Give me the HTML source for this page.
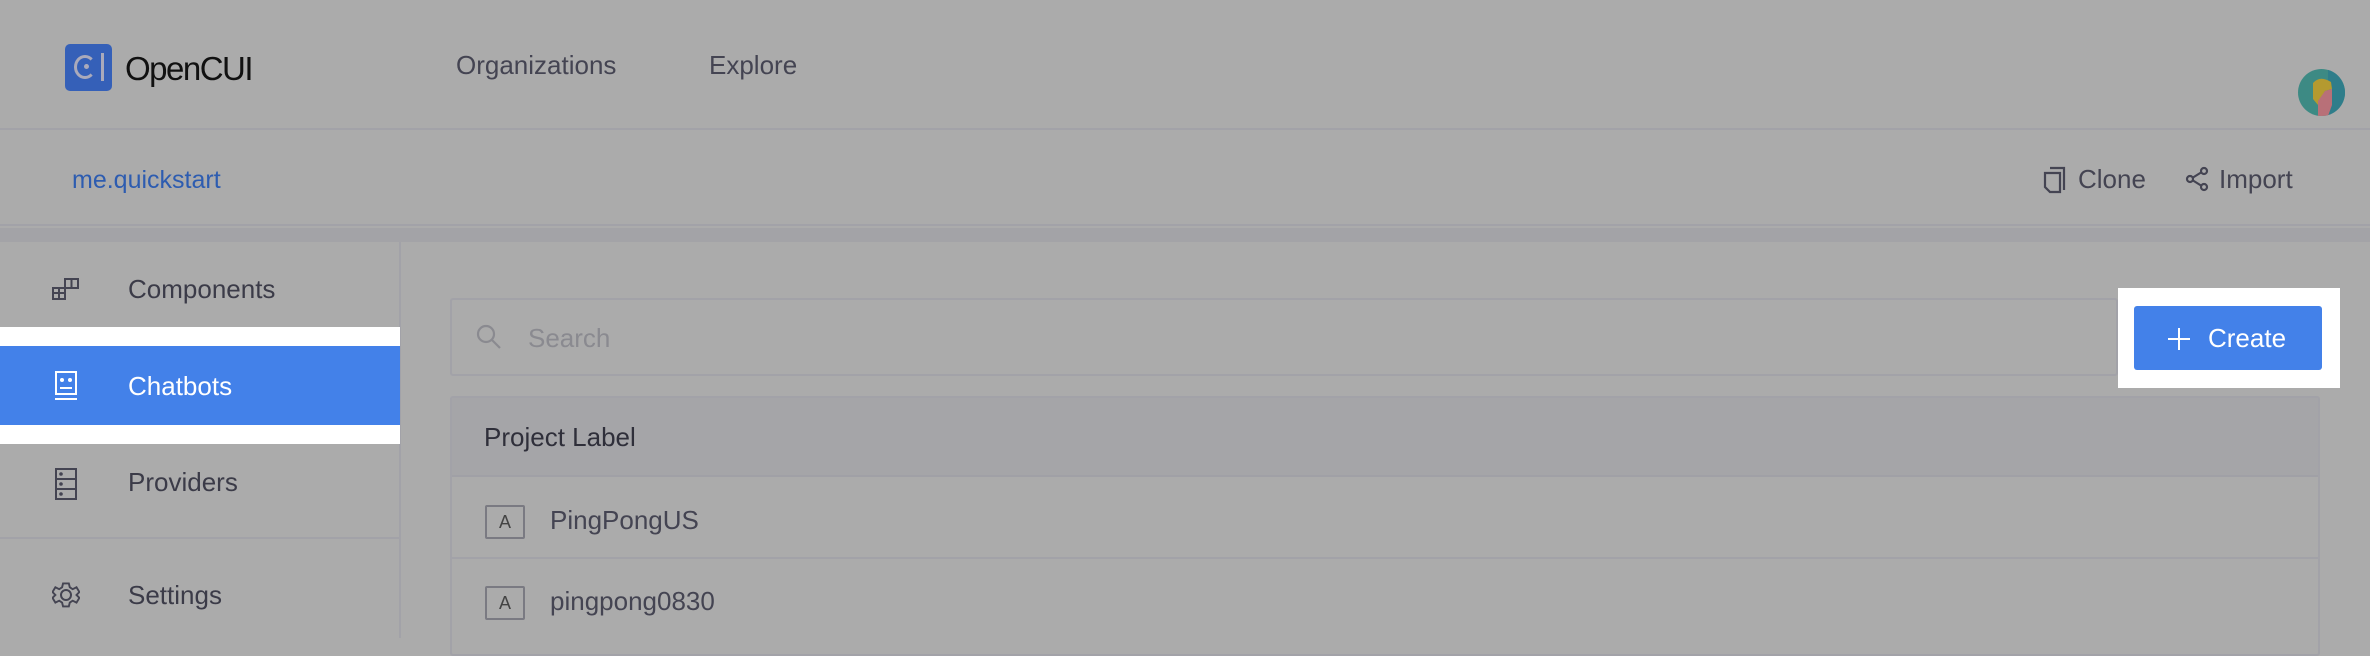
<!DOCTYPE html>
<html><head><meta charset="utf-8"><style>
*{margin:0;padding:0;box-sizing:border-box}
body{width:2370px;height:638px;overflow:hidden;background:#ababab;font-family:"Liberation Sans",sans-serif;color:#3b3b48;position:relative}
.a{position:absolute}
.t{font-size:26px;line-height:1}
</style></head><body>
<!-- header -->
<div class="a" style="left:0;top:0;width:2370px;height:130px;border-bottom:2px solid #a2a2a8"></div>
<div class="a" style="left:65px;top:44px;width:47px;height:47px;background:#3560b8;border-radius:5px"></div>
<div class="a" style="left:74px;top:55px;width:22px;height:24px;border:3px solid #aab;border-right-color:transparent;border-radius:50%"></div>
<div class="a" style="left:84px;top:64px;width:5px;height:5px;background:#aab;border-radius:50%"></div>
<div class="a" style="left:101px;top:53px;width:3px;height:28px;background:#aab"></div>
<div class="a" style="left:125px;top:50px;font-size:33px;color:#111;letter-spacing:-1.5px">OpenCUI</div>
<div class="a t" style="left:456px;top:52px;color:#444452">Organizations</div>
<div class="a t" style="left:709px;top:52px;color:#444452">Explore</div>
<svg class="a" style="left:2298px;top:69px" width="47" height="47" viewBox="0 0 47 47"><defs><clipPath id="c"><circle cx="23.5" cy="23.5" r="23.5"/></clipPath></defs><g clip-path="url(#c)"><rect width="47" height="47" fill="#3d8a84"/><rect x="30" width="17" height="47" fill="#2f7d8a"/><path d="M15 14 Q22 6 33 13 L34 20 L27 22 L20 36 L15 30 Z" fill="#b49a30"/><path d="M20 47 L20 32 L27 22 L34 20 L34 36 L30 47 Z" fill="#b87078"/></g></svg>
<!-- subheader -->
<div class="a" style="left:0;top:132px;width:2370px;height:94px;border-bottom:2px solid #a2a2a8"></div>
<div class="a" style="left:72px;top:166px;font-size:25px;color:#2d5cb0">me.quickstart</div>
<svg class="a" style="left:2043px;top:166px" width="24" height="28" viewBox="0 0 24 28" fill="none" stroke="#444452" stroke-width="2.2"><path d="M7 2H21V24"/><path d="M2 7H17V26H7L2 21Z"/></svg>
<div class="a t" style="left:2078px;top:166px;color:#444452">Clone</div>
<svg class="a" style="left:2185px;top:166px" width="24" height="26" viewBox="0 0 24 26" fill="none" stroke="#444452" stroke-width="2.2"><circle cx="19" cy="5" r="3"/><circle cx="5" cy="13" r="3"/><circle cx="19" cy="21" r="3"/><path d="M8 11.5L16 6.5M8 14.5L16 19.5"/></svg>
<div class="a t" style="left:2219px;top:166px;color:#444452">Import</div>
<div class="a" style="left:0;top:228px;width:2370px;height:14px;background:#a3a3a7"></div>
<!-- sidebar -->
<div class="a" style="left:399px;top:242px;width:2px;height:396px;background:#a2a2a8"></div>
<svg class="a" style="left:52px;top:278px" width="28" height="22" viewBox="0 0 28 22" fill="none" stroke="#444452" stroke-width="2"><path d="M1 10H13V21H1ZM7 10V21M1 15H13M13 1H26V10H13ZM19.5 1V10"/></svg>
<div class="a t" style="left:128px;top:276px">Components</div>
<div class="a" style="left:0;top:327px;width:400px;height:117px;background:#fff"></div>
<div class="a" style="left:0;top:346px;width:400px;height:79px;background:#4381e9"></div>
<svg class="a" style="left:54px;top:370px" width="24" height="32" viewBox="0 0 24 32" fill="none" stroke="#fff" stroke-width="2"><rect x="2" y="2" width="20" height="22"/><path d="M1 29H23M6 18H18"/><circle cx="8" cy="10" r="1" fill="#fff"/><circle cx="16" cy="10" r="1" fill="#fff"/></svg>
<div class="a t" style="left:128px;top:373px;color:#fff">Chatbots</div>
<svg class="a" style="left:54px;top:467px" width="24" height="34" viewBox="0 0 24 34" fill="none" stroke="#444452" stroke-width="2"><rect x="2" y="2" width="20" height="30"/><path d="M2 12H22M2 22H22"/><circle cx="7" cy="7" r="0.8" fill="#444452"/><circle cx="7" cy="17" r="0.8" fill="#444452"/><circle cx="7" cy="27" r="0.8" fill="#444452"/></svg>
<div class="a t" style="left:128px;top:469px">Providers</div>
<div class="a" style="left:0;top:537px;width:400px;height:2px;background:#a2a2a8"></div>
<svg class="a" style="left:52px;top:581px" width="28" height="28" viewBox="0 0 28 28" fill="none" stroke="#444452" stroke-width="2"><path d="M11 2H17L18 6L21 8L25 6L28 11L25 14L28 17L25 22L21 20L18 22L17 26H11L10 22L7 20L3 22L0 17L3 14L0 11L3 6L7 8L10 6Z" transform="translate(0.5,0.5) scale(0.96)"/><circle cx="14" cy="14" r="5"/></svg>
<div class="a t" style="left:128px;top:582px">Settings</div>
<!-- main -->
<div class="a" style="left:450px;top:298px;width:1668px;height:78px;border:2px solid #a2a2a8;border-radius:3px"></div>
<svg class="a" style="left:476px;top:324px" width="26" height="26" viewBox="0 0 26 26" fill="none" stroke="#8a8a90" stroke-width="2.2"><circle cx="10" cy="10" r="8"/><path d="M16 16L24 24"/></svg>
<div class="a t" style="left:528px;top:325px;color:#8a8a90">Search</div>
<div class="a" style="left:2118px;top:288px;width:222px;height:100px;background:#fff"></div>
<div class="a" style="left:2134px;top:306px;width:188px;height:64px;background:#4381e9;border-radius:3px"></div>
<svg class="a" style="left:2167px;top:327px" width="24" height="24" viewBox="0 0 24 24" stroke="#fff" stroke-width="2"><path d="M12 1V23M1 12H23"/></svg>
<div class="a t" style="left:2208px;top:325px;color:#fff">Create</div>
<div class="a" style="left:450px;top:396px;width:1870px;height:260px;border:2px solid #a2a2a8;border-radius:3px"></div>
<div class="a" style="left:452px;top:398px;width:1866px;height:79px;background:#a5a5a8;border-bottom:2px solid #a0a0a6"></div>
<div class="a t" style="left:484px;top:424px;color:#2f2f3a">Project Label</div>
<div class="a" style="left:452px;top:557px;width:1866px;height:2px;background:#a2a2a8"></div>
<div class="a" style="left:485px;top:505px;width:40px;height:34px;border:2px solid #7a7a82;border-radius:2px;font-size:18px;text-align:center;line-height:30px;color:#444">A</div>
<div class="a t" style="left:550px;top:507px;color:#444452">PingPongUS</div>
<div class="a" style="left:485px;top:586px;width:40px;height:34px;border:2px solid #7a7a82;border-radius:2px;font-size:18px;text-align:center;line-height:30px;color:#444">A</div>
<div class="a t" style="left:550px;top:588px;color:#444452">pingpong0830</div>
</body></html>
